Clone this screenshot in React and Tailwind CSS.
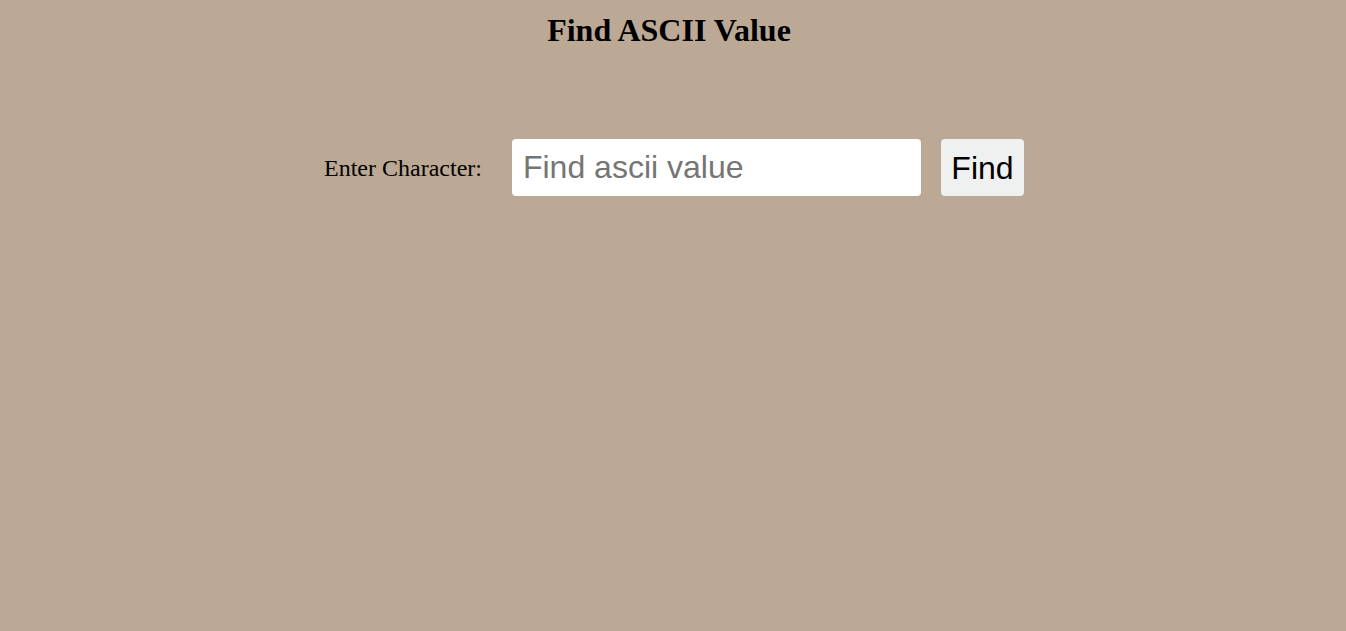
import { useState } from 'react'

export default function App() {
  const [ch, setCh] = useState('')

  return (
    <div className="min-h-screen bg-[#bba995] font-['Liberation_Serif',serif] text-black">
      <h1 className="pt-[12px] pr-[8px] text-center text-[32px] font-bold leading-[37px]">Find ASCII Value</h1>
      <div className="mt-[90px] flex items-center justify-center pl-[2px]">
        <label className="mr-[30px] text-[24px]">Enter Character:</label>
        <input
          value={ch}
          onChange={(e) => setCh(e.target.value)}
          placeholder="Find ascii value"
          className="h-[57px] w-[409px] rounded-[4px] bg-white px-[11px] font-['Liberation_Sans',sans-serif] text-[32px] outline-none placeholder:text-[#757575]"
        />
        <button className="ml-[20px] h-[57px] w-[83px] rounded-[4px] bg-[#eff0f0] font-['Liberation_Sans',sans-serif] text-[32px]">
          Find
        </button>
      </div>
    </div>
  )
}
